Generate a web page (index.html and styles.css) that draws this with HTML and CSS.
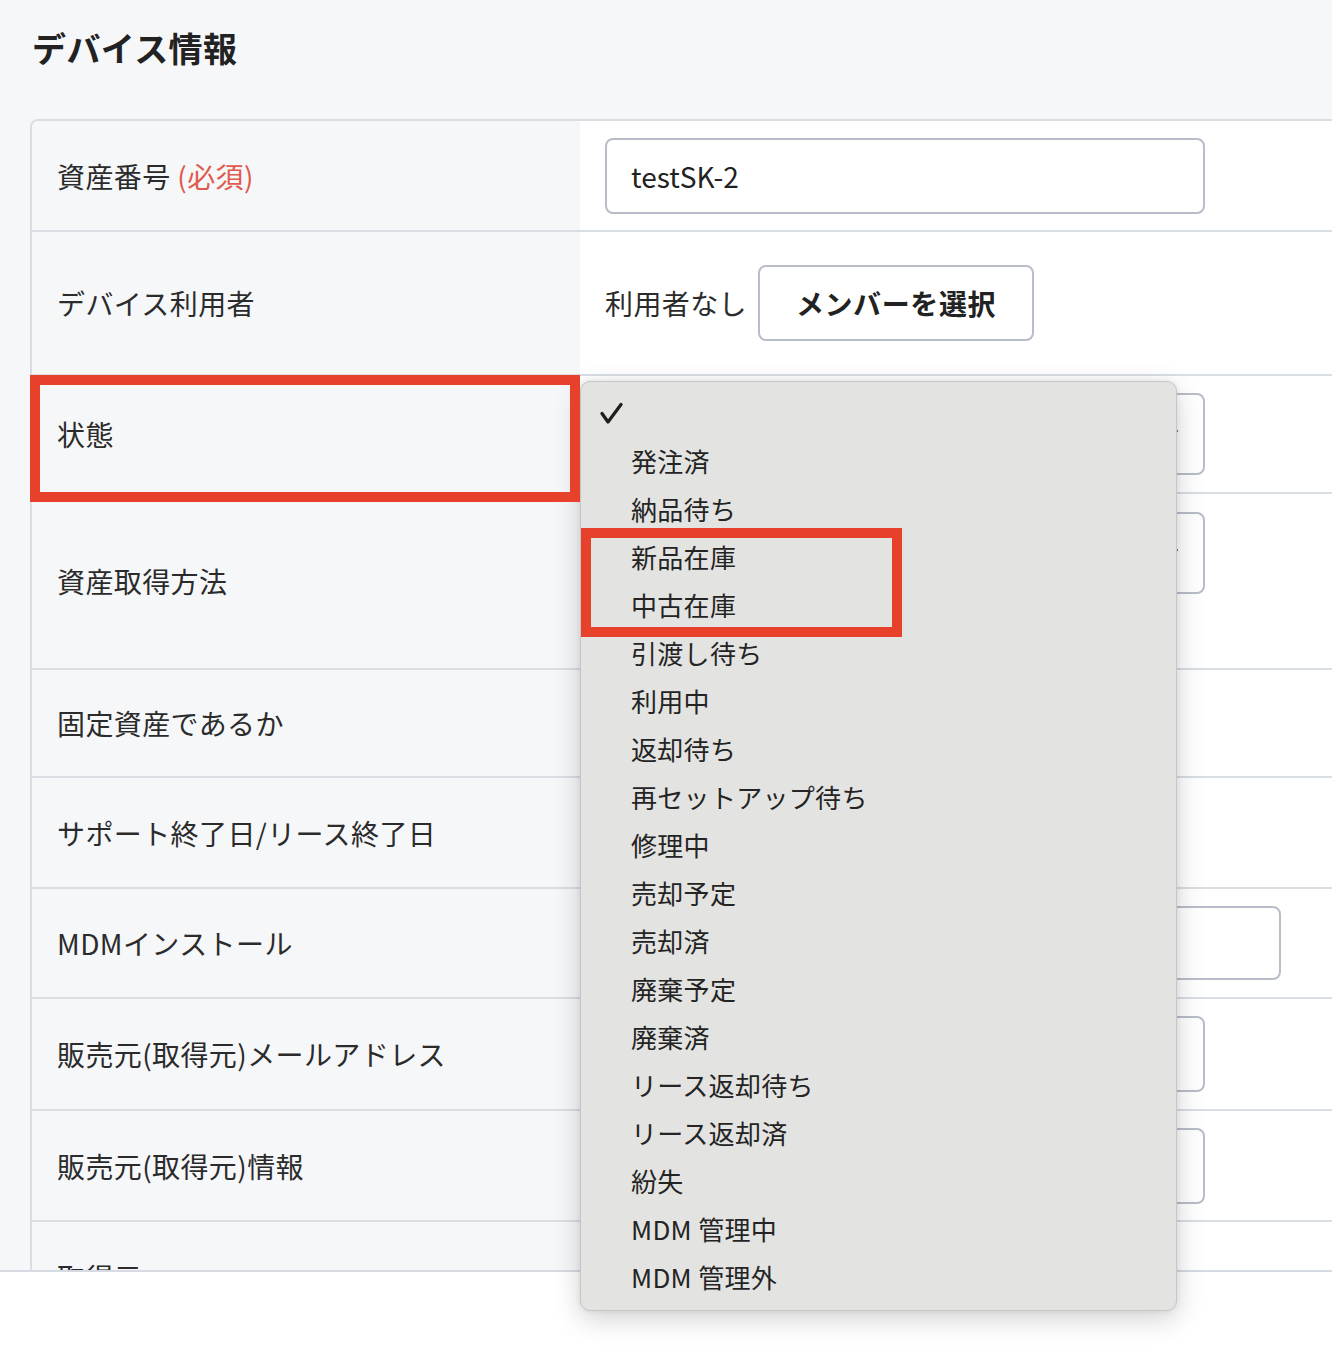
FILE: index.html
```html
<!DOCTYPE html>
<html lang="ja">
<head>
<meta charset="utf-8">
<title>デバイス情報</title>
<link rel="stylesheet" href="styles.css">
</head>
<body>
<div class="screen">
  <main class="page">
    <h1 class="title">デバイス情報</h1>
    <div class="table">
      <div class="row row-asset">
        <div class="label">資産番号 <span class="req">(必須)</span></div>
        <div class="value"><div class="field">testSK-2</div></div>
      </div>
      <div class="row row-user">
        <div class="label">デバイス利用者</div>
        <div class="value"><span class="plain">利用者なし</span><button class="btn">メンバーを選択</button></div>
      </div>
      <div class="row row-state">
        <div class="label">状態</div>
        <div class="value"><div class="field select"><svg class="chev" width="16" height="10" viewBox="0 0 16 10"><path d="M2 2 L8 8 L14 2" fill="none" stroke="#555" stroke-width="2" stroke-linecap="round" stroke-linejoin="round"/></svg></div></div>
      </div>
      <div class="row row-method">
        <div class="label">資産取得方法</div>
        <div class="value value-top"><div class="field select"><svg class="chev" width="16" height="10" viewBox="0 0 16 10"><path d="M2 2 L8 8 L14 2" fill="none" stroke="#555" stroke-width="2" stroke-linecap="round" stroke-linejoin="round"/></svg></div></div>
      </div>
      <div class="row row-fixed">
        <div class="label">固定資産であるか</div>
        <div class="value"></div>
      </div>
      <div class="row row-support">
        <div class="label">サポート終了日/リース終了日</div>
        <div class="value"></div>
      </div>
      <div class="row row-mdm">
        <div class="label">MDMインストール</div>
        <div class="value"><div class="field field-wide"></div></div>
      </div>
      <div class="row row-mail">
        <div class="label">販売元(取得元)メールアドレス</div>
        <div class="value"><div class="field"></div></div>
      </div>
      <div class="row row-info">
        <div class="label">販売元(取得元)情報</div>
        <div class="value"><div class="field"></div></div>
      </div>
      <div class="row row-source">
        <div class="label">取得元</div>
        <div class="value"></div>
      </div>
    </div>
  </main>
  <footer class="footer"></footer>

  <ul class="menu">
    <li class="item item-checked"><svg class="check" width="24" height="22" viewBox="0 0 24 22"><path d="M3 11.5 L9 20 L22 2.5" fill="none" stroke="#1e1e1e" stroke-width="3.2" stroke-linecap="round" stroke-linejoin="round"/></svg></li>
    <li class="item">発注済</li>
    <li class="item">納品待ち</li>
    <li class="item">新品在庫</li>
    <li class="item">中古在庫</li>
    <li class="item">引渡し待ち</li>
    <li class="item">利用中</li>
    <li class="item">返却待ち</li>
    <li class="item">再セットアップ待ち</li>
    <li class="item">修理中</li>
    <li class="item">売却予定</li>
    <li class="item">売却済</li>
    <li class="item">廃棄予定</li>
    <li class="item">廃棄済</li>
    <li class="item">リース返却待ち</li>
    <li class="item">リース返却済</li>
    <li class="item">紛失</li>
    <li class="item">MDM 管理中</li>
    <li class="item">MDM 管理外</li>
  </ul>

  <div class="mark mark-label"></div>
  <div class="mark mark-options"></div>
</div>
</body>
</html>
```

FILE: styles.css
```css
* {
  box-sizing: border-box;
}

html, body {
  margin: 0;
  padding: 0;
  background: #ffffff;
}

body {
  font-family: "Noto Sans CJK JP", "Noto Sans", sans-serif;
  color: #2b2b2b;
}

.screen {
  position: relative;
  width: 1332px;
  height: 1362px;
  overflow: hidden;
}

.page {
  height: 1272px;
  background: #f6f7f9;
  border-bottom: 2px solid #d6dae2;
  overflow: hidden;
}

.title {
  margin: 0;
  padding: 24px 0 0 32px;
  font-size: 34px;
  line-height: 48px;
  font-weight: 700;
  letter-spacing: 0.4px;
  color: #222;
  height: 119px;
}

.table {
  margin-left: 30px;
  border-top: 2px solid #d9dde4;
  border-left: 2px solid #d9dde4;
  border-top-left-radius: 8px;
  overflow: hidden;
}

.row {
  display: flex;
  border-bottom: 2px solid #d9dde4;
}

.row-asset { height: 111px; }
.row-user { height: 144px; }
.row-state { height: 118px; }
.row-method { height: 176px; }
.row-fixed { height: 108px; }
.row-support { height: 111px; }
.row-mdm { height: 110px; }
.row-mail { height: 112px; }
.row-info { height: 111px; }
.row-source { height: 112px; }

.label {
  width: 548px;
  flex: none;
  display: flex;
  align-items: center;
  padding-left: 25px;
  font-size: 28px;
  letter-spacing: 0.4px;
  background: #f6f7f9;
  white-space: pre;
}

.req {
  color: #e05a4e;
}

.value {
  flex: 1;
  display: flex;
  align-items: center;
  padding-left: 25px;
  background: #ffffff;
}

.value-top {
  align-items: flex-start;
  padding-top: 18px;
}

.field {
  width: 600px;
  height: 76px;
  border: 2px solid #b8bdc9;
  border-radius: 8px;
  background: #fff;
  display: flex;
  align-items: center;
  padding-left: 24px;
  font-size: 28px;
  color: #222;
}

.field.select {
  height: 82px;
  justify-content: flex-end;
  padding-right: 24px;
}

.field-wide {
  width: 676px;
  height: 74px;
}

.plain {
  font-size: 28px;
  letter-spacing: 0.4px;
  color: #2b2b2b;
}

.btn {
  margin-left: 11px;
  width: 276px;
  height: 76px;
  border: 2px solid #b8bdc9;
  border-radius: 8px;
  background: #fff;
  font-family: "Noto Sans CJK JP", "Noto Sans", sans-serif;
  font-size: 28px;
  font-weight: 700;
  letter-spacing: 0.6px;
  color: #222;
  padding: 0;
}

.footer {
  height: 90px;
  background: #ffffff;
}

.menu {
  position: absolute;
  left: 580px;
  top: 381px;
  width: 597px;
  height: 930px;
  margin: 0;
  padding: 7px 0 0 0;
  list-style: none;
  background: #e3e3e1;
  border: 1px solid #c6c6c4;
  border-radius: 10px;
  box-shadow: 0 8px 28px rgba(0, 0, 0, 0.18), 0 0 6px rgba(0, 0, 0, 0.08);
}

.item {
  position: relative;
  height: 48px;
  line-height: 48px;
  padding-left: 50px;
  font-size: 26px;
  letter-spacing: 0.3px;
  color: #242424;
  white-space: nowrap;
}

.check {
  position: absolute;
  left: 18px;
  top: 13px;
}

.mark {
  position: absolute;
  border: 10px solid #e8412b;
}

.mark-label {
  left: 30px;
  top: 375px;
  width: 550px;
  height: 127px;
}

.mark-options {
  left: 581px;
  top: 528px;
  width: 321px;
  height: 109px;
}
```
